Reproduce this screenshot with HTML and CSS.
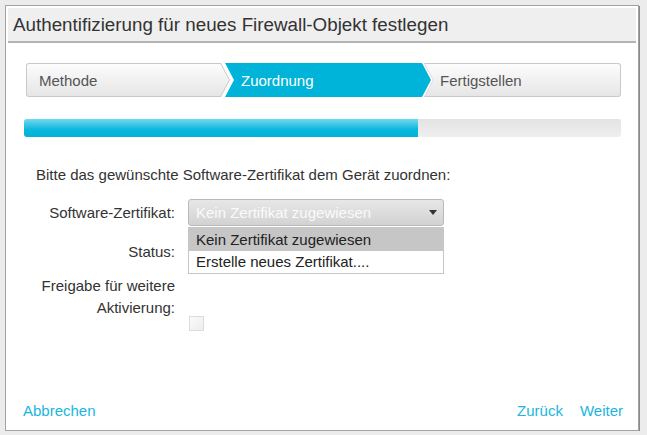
FILE: index.html
```html
<!DOCTYPE html>
<html>
<head>
    <title>Authentifizierung für neues Firewall-Objekt festlegen</title>
    <link rel="stylesheet" href="styles.css">
</head>
<body>
    <div class="dialog">
        <div class="dialog-header">
            <h1>Authentifizierung für neues Firewall-Objekt festlegen</h1>
        </div>

        <div class="dialog-body">
            <div class="steps">
                <div class="step step-first"><span>Methode</span></div>
                <div class="step step-active"><span>Zuordnung</span></div>
                <div class="step step-last"><span>Fertigstellen</span></div>
            </div>

            <div class="progress">
                <div class="progress-fill" style="width: 66%;"></div>
            </div>

            <p class="intro">Bitte das gewünschte Software-Zertifikat dem Gerät zuordnen:</p>

            <div class="form-grid">
                <label class="form-label">Software-Zertifikat:</label>
                <div class="field">
                    <div class="select">
                        <span>Kein Zertifikat zugewiesen</span>
                        <span class="select-arrow"></span>
                    </div>
                    <ul class="dropdown">
                        <li class="selected">Kein Zertifikat zugewiesen</li>
                        <li>Erstelle neues Zertifikat....</li>
                    </ul>
                </div>

                <label class="form-label">Status:</label>
                <div class="field"></div>

                <label class="form-label">Freigabe für weitere Aktivierung:</label>
                <div class="field">
                    <span class="checkbox"></span>
                </div>
            </div>
        </div>

        <div class="dialog-footer">
            <a href="#" class="link">Abbrechen</a>
            <div class="footer-right">
                <a href="#" class="link">Zurück</a>
                <a href="#" class="link">Weiter</a>
            </div>
        </div>
    </div>
</body>
</html>
```

FILE: styles.css
```css
body {
    margin: 0;
    font-family: 'Liberation Sans', Arial, sans-serif;
    background-color: #ececec;
    color: #333;
}

.dialog {
    margin: 5px 0 0 5px;
    width: 632px;
    height: 424px;
    border: 1px solid #a3a3a3;
    box-shadow: 1px 1px 0 #8a8a8a;
    background-color: #fff;
    display: flex;
    flex-direction: column;
}

.dialog-header {
    margin: 2px 2px 0 2px;
    height: 33px;
    background-color: #efefef;
    border-bottom: 2px solid #b4b4b4;
    display: flex;
    align-items: center;
}

.dialog-header h1 {
    margin: 0 0 0 5px;
    font-size: 18.8px;
    font-weight: normal;
    color: #333;
}

.dialog-body {
    flex: 1;
    padding: 20px 17px 0 18px;
}

/* wizard steps */
.steps {
    display: flex;
    height: 34px;
    margin-left: 2px;
}

.step {
    position: relative;
    height: 34px;
    display: flex;
    align-items: center;
    font-size: 15px;
    color: #555;
}

.step span {
    position: relative;
}

.step-first {
    width: 204px;
    padding-left: 13px;
    box-sizing: border-box;
    background-color: #c9c9c9;
    border-radius: 3px 0 0 3px;
    clip-path: polygon(0 0, calc(100% - 9px) 0, 100% 50%, calc(100% - 9px) 100%, 0 100%);
}

.step-first::before,
.step-last::before {
    content: '';
    position: absolute;
    top: 1px;
    bottom: 1px;
    left: 1px;
    right: 1px;
    background: linear-gradient(#fdfcfd, #e7e6e7);
}

.step-first::before {
    border-radius: 2px 0 0 2px;
    clip-path: polygon(0 0, calc(100% - 8.5px) 0, 100% 50%, calc(100% - 8.5px) 100%, 0 100%);
}

.step-active {
    width: 206px;
    margin-left: -5px;
    padding-left: 16px;
    box-sizing: border-box;
    background-color: #00b3d8;
    color: #fff;
    clip-path: polygon(0 0, calc(100% - 9px) 0, 100% 50%, calc(100% - 9px) 100%, 0 100%, 9px 50%);
}

.step-last {
    width: 197px;
    margin-left: -7px;
    padding-left: 16px;
    box-sizing: border-box;
    background-color: #c9c9c9;
    border-radius: 0 3px 3px 0;
    clip-path: polygon(0 0, 100% 0, 100% 100%, 0 100%, 9px 50%);
}

.step-last::before {
    border-radius: 0 2px 2px 0;
    clip-path: polygon(0 0, 100% 0, 100% 100%, 0 100%, 8.5px 50%);
}

/* progress */
.progress {
    margin-top: 22px;
    height: 18px;
    background: linear-gradient(#e3e3e3, #efefef);
    border-radius: 3px;
    overflow: hidden;
}

.progress-fill {
    height: 100%;
    background: linear-gradient(#72d9f0, #0ab6dc 60%, #00b3d8);
}

.intro {
    margin: 28px 0 0 12px;
    height: 20px;
    line-height: 20px;
    font-size: 15px;
    color: #333;
}

/* form */
.form-grid {
    display: grid;
    grid-template-columns: 151px 256px;
    grid-template-rows: 42px 34px auto;
    column-gap: 13px;
    margin-top: 14px;
    font-size: 15px;
}

.form-label {
    text-align: right;
    line-height: 22px;
    color: #333;
}

.form-label:first-child {
    line-height: 27px;
}

.field {
    position: relative;
}

.select {
    height: 25px;
    border: 1px solid #b9b9b9;
    border-radius: 3px;
    background: linear-gradient(#e7e7e7, #d2d2d2);
    display: flex;
    align-items: center;
    justify-content: space-between;
    padding: 0 6px 0 7px;
    font-size: 15px;
    color: #fafafa;
}

.select-arrow {
    width: 0;
    height: 0;
    border-left: 4.5px solid transparent;
    border-right: 4.5px solid transparent;
    border-top: 5px solid #333;
}

.dropdown {
    position: absolute;
    top: 28px;
    left: 0;
    right: 0;
    margin: 0;
    padding: 0;
    list-style: none;
    background-color: #fff;
    border: 1px solid #c6c6c6;
    font-size: 15px;
    color: #222;
    z-index: 2;
}

.dropdown li {
    height: 22px;
    line-height: 22px;
    padding-left: 7px;
}

.dropdown li.selected {
    height: 23px;
    line-height: 23px;
    background-color: #c6c6c6;
}

.checkbox {
    display: block;
    margin-top: 41px;
    margin-left: 1px;
    width: 13px;
    height: 13px;
    border: 1px solid #dcdcdc;
    background: linear-gradient(135deg, #fafafa, #ededed);
}

/* footer */
.dialog-footer {
    display: flex;
    justify-content: space-between;
    padding: 0 15px 11px 17px;
    font-size: 15px;
}

.footer-right {
    display: flex;
    gap: 17px;
}

.link {
    color: #1bb5e0;
    text-decoration: none;
}
```
